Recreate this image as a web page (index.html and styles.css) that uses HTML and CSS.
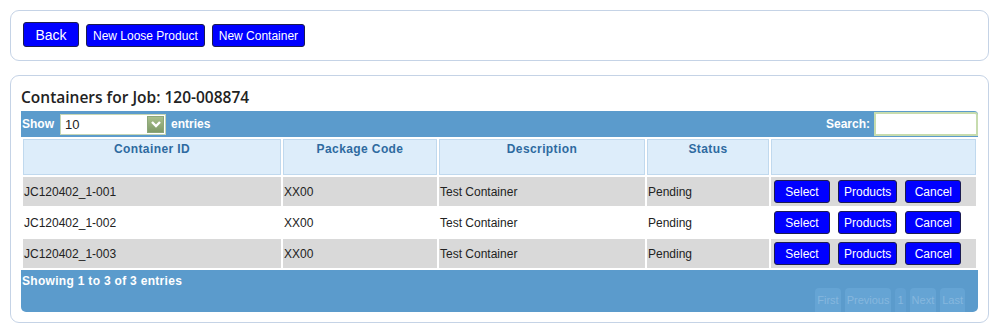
FILE: index.html
```html
<!DOCTYPE html>
<html lang="en">
<head>
    <meta charset="UTF-8">
    <title>Containers</title>
    <link rel="stylesheet" href="styles.css">
</head>
<body>

<div class="panel toolbar">
    <button class="btn btn-back">Back</button>
    <button class="btn">New Loose Product</button>
    <button class="btn">New Container</button>
</div>

<div class="panel list-panel">
    <h2 class="list-title">Containers for Job: 120-008874</h2>
    <div class="table-wrapper">
        <div class="table-top">
            <div class="length">
                Show
                <span class="select-box">
                    <span class="select-value">10</span>
                    <span class="select-arrow">
                        <svg width="12" height="10" viewBox="0 0 12 10"><path d="M2 3 L6 7 L10 3" fill="none" stroke="#fff" stroke-width="2.4"/></svg>
                    </span>
                </span>
                entries
            </div>
            <div class="search">
                Search: <span class="search-input"></span>
            </div>
        </div>
        <table class="data-table">
            <thead>
                <tr>
                    <th class="col-id">Container ID</th>
                    <th class="col-code">Package Code</th>
                    <th class="col-desc">Description</th>
                    <th class="col-status">Status</th>
                    <th class="col-actions"></th>
                </tr>
            </thead>
            <tbody>
                <tr class="odd">
                    <td>JC120402_1-001</td>
                    <td>XX00</td>
                    <td>Test Container</td>
                    <td>Pending</td>
                    <td class="actions">
                        <button class="btn btn-sm">Select</button>
                        <button class="btn btn-sm">Products</button>
                        <button class="btn btn-sm">Cancel</button>
                    </td>
                </tr>
                <tr class="even">
                    <td>JC120402_1-002</td>
                    <td>XX00</td>
                    <td>Test Container</td>
                    <td>Pending</td>
                    <td class="actions">
                        <button class="btn btn-sm">Select</button>
                        <button class="btn btn-sm">Products</button>
                        <button class="btn btn-sm">Cancel</button>
                    </td>
                </tr>
                <tr class="odd">
                    <td>JC120402_1-003</td>
                    <td>XX00</td>
                    <td>Test Container</td>
                    <td>Pending</td>
                    <td class="actions">
                        <button class="btn btn-sm">Select</button>
                        <button class="btn btn-sm">Products</button>
                        <button class="btn btn-sm">Cancel</button>
                    </td>
                </tr>
            </tbody>
        </table>
        <div class="table-bottom">
            <div class="info">Showing 1 to 3 of 3 entries</div>
            <div class="paging">
                <span class="page-btn">First</span>
                <span class="page-btn">Previous</span>
                <span class="page-num">1</span>
                <span class="page-btn">Next</span>
                <span class="page-btn">Last</span>
            </div>
        </div>
    </div>
</div>

</body>
</html>
```

FILE: styles.css
```css
* {
    box-sizing: border-box;
    margin: 0;
    padding: 0;
}
body {
    margin: 10px;
    width: 979px;
    font-family: "Liberation Sans", Arial, sans-serif;
    font-size: 12px;
    color: #222;
    background: #fff;
}
.panel {
    border: 1px solid #c5d3e6;
    border-radius: 9px;
    background: #fff;
}
.toolbar {
    height: 51px;
    padding: 11px 12px 0;
    display: flex;
    align-items: flex-start;
    gap: 7px;
}
.btn {
    background: #0000ff;
    color: #fff;
    border: 1px solid #1c1c50;
    border-radius: 3px;
    font-family: "Liberation Sans", Arial, sans-serif;
    font-size: 12px;
    height: 23px;
    padding: 0 6px;
    cursor: pointer;
}
.toolbar .btn {
    margin-top: 2px;
}
.toolbar .btn-back {
    margin-top: 0;
    height: 25px;
    width: 56px;
    font-size: 14px;
}
.list-panel {
    margin-top: 14px;
    height: 248px;
    padding: 10px 10px 0;
}
.list-title {
    font-family: "Open Sans", sans-serif;
    font-size: 15.5px;
    font-weight: 600;
    color: #222;
    line-height: 22px;
    height: 25px;
}
.table-wrapper {
    width: 957px;
}
.table-top {
    height: 26px;
    background: #5b9bcc;
    border-radius: 0 4px 0 0;
    display: flex;
    justify-content: space-between;
    align-items: center;
    color: #fff;
    font-weight: bold;
    font-size: 12px;
}
.length {
    display: flex;
    align-items: center;
    gap: 5px;
    padding-left: 1px;
}
.select-box {
    display: flex;
    align-items: center;
    width: 106px;
    height: 21px;
    background: #fff;
    border: 1px solid #c6d6b4;
    margin-left: 1px;
}
.select-value {
    flex: 1;
    color: #222;
    font-weight: normal;
    font-size: 13px;
    padding-left: 4px;
}
.select-arrow {
    width: 17px;
    height: 17px;
    margin-right: 1px;
    background: linear-gradient(#a8bf8c, #7f9a68);
    border: 1px solid #8da77a;
    display: flex;
    align-items: center;
    justify-content: center;
}
.search {
    display: flex;
    align-items: center;
    gap: 4px;
}
.search-input {
    width: 104px;
    height: 24px;
    background: #fff;
    border: 2px solid #c7dcae;
    border-radius: 0 3px 0 0;
}
.data-table {
    width: 957px;
    border-spacing: 2px;
    table-layout: fixed;
}
.data-table th {
    height: 36px;
    background: #ddedfa;
    border: 1px solid #c0d9ee;
    color: #2e6aa0;
    font-size: 12px;
    font-weight: bold;
    letter-spacing: 0.4px;
    vertical-align: top;
    padding-top: 2px;
    text-align: center;
}
.col-id { width: 258px; }
.col-code { width: 154px; }
.col-desc { width: 206px; }
.col-status { width: 122px; }
.col-actions { width: 205px; }
.data-table td {
    height: 29px;
    padding: 0 1px;
    font-size: 12px;
    color: #222;
    vertical-align: middle;
}
.odd td {
    background: #d9d9d9;
}
.even td {
    background: #fff;
}
.data-table td.actions {
    padding-left: 3px;
    display: flex;
    align-items: center;
    gap: 8px;
    height: 29px;
}
.btn-sm {
    height: 23px;
    min-width: 56px;
    padding: 0 5px;
}
.table-bottom {
    height: 42px;
    background: #5b9bcc;
    border-radius: 0 0 5px 5px;
    position: relative;
}
.info {
    color: #fff;
    font-weight: bold;
    font-size: 12px;
    letter-spacing: 0.3px;
    padding: 4px 0 0 1px;
}
.paging {
    position: absolute;
    right: 13px;
    bottom: 0;
    display: flex;
    gap: 4px;
}
.page-btn, .page-num {
    height: 24px;
    line-height: 24px;
    padding: 0 2px;
    color: #86b7de;
    background: #65a4d4;
    border-radius: 4px 4px 0 0;
    font-size: 11px;
}
.page-num {
    background: #62a1d2;
}
```
